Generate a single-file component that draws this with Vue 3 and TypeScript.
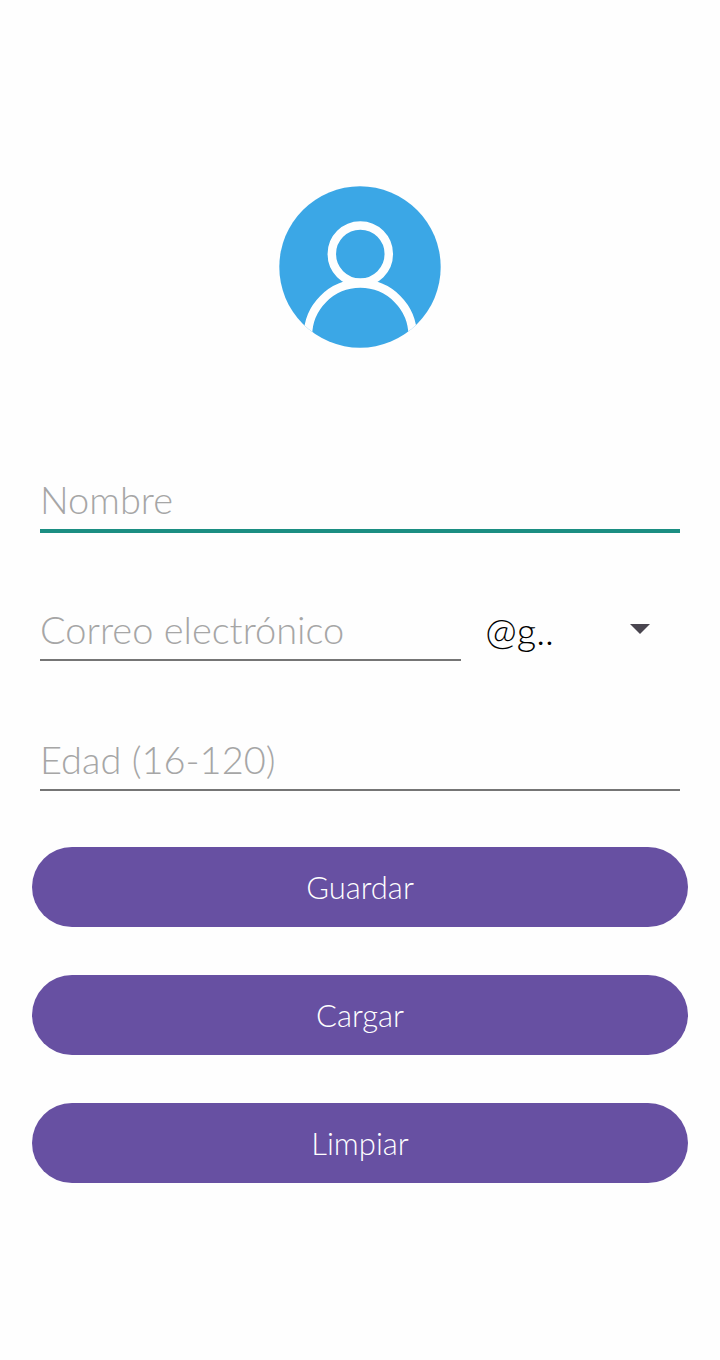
<script setup lang="ts">
import { ref } from 'vue'

const name = ref('')
const email = ref('')
const domain = ref('@g..')
const age = ref('')

function save(): void {
  localStorage.setItem(
    'profile',
    JSON.stringify({ name: name.value, email: email.value, domain: domain.value, age: age.value }),
  )
}

function load(): void {
  const stored = localStorage.getItem('profile')
  if (!stored) return
  const profile = JSON.parse(stored)
  name.value = profile.name
  email.value = profile.email
  domain.value = profile.domain
  age.value = profile.age
}

function clear(): void {
  name.value = ''
  email.value = ''
  age.value = ''
}
</script>

<template>
  <main class="page">
    <svg class="avatar" viewBox="0 0 162 162" aria-hidden="true">
      <defs>
        <clipPath id="disc"><circle cx="81" cy="81" r="80.7" /></clipPath>
      </defs>
      <g clip-path="url(#disc)">
        <rect width="162" height="162" fill="#3ba7e6" />
        <g fill="none" stroke="#fefefe" stroke-width="8.5">
          <circle cx="81.3" cy="68" r="28.5" />
          <circle cx="81.3" cy="150" r="52.4" />
        </g>
      </g>
    </svg>

    <form class="form" @submit.prevent="save">
      <div class="fields">
        <div class="field">
          <input v-model="name" class="input active" type="text" placeholder="Nombre" aria-label="Nombre" />
        </div>
        <div class="row">
          <div class="field email">
            <input v-model="email" class="input" type="text" placeholder="Correo electrónico" aria-label="Correo electrónico" />
          </div>
          <div class="picker">
            <select v-model="domain" class="select" aria-label="Dominio">
              <option value="@g..">@g..</option>
            </select>
            <svg class="arrow" viewBox="0 0 20 10" aria-hidden="true">
              <path d="M0 0H20L10 10Z" fill="#49454f" />
            </svg>
          </div>
        </div>
        <div class="field">
          <input v-model="age" class="input" type="text" inputmode="numeric" placeholder="Edad (16-120)" aria-label="Edad (16-120)" />
        </div>
      </div>
      <div class="actions">
        <button class="button" type="submit">Guardar</button>
        <button class="button" type="button" @click="load">Cargar</button>
        <button class="button" type="button" @click="clear">Limpiar</button>
      </div>
    </form>
  </main>
</template>

<style>
body {
  margin: 0;
  background: #fefefe;
}
</style>

<style scoped>
.page {
  display: flex;
  flex-direction: column;
  align-items: center;
  gap: 125px;
  padding: 186px 32px 32px;
  font-family: Lato, "Open Sans", sans-serif;
  font-weight: 300;
}
.avatar {
  display: block;
  width: 162px;
  height: 162px;
}
.form {
  width: 100%;
  display: flex;
  flex-direction: column;
  gap: 56px;
}
.fields {
  display: flex;
  flex-direction: column;
  gap: 72px;
}
.field {
  padding: 0 8px;
}
.row {
  display: grid;
  grid-template-columns: 2fr 1fr;
}
.input {
  display: block;
  box-sizing: border-box;
  width: 100%;
  height: 58px;
  padding: 0 0 4px;
  border: 0;
  border-bottom: 2px solid #757575;
  border-radius: 0;
  outline: 0;
  background: transparent;
  color: #000;
  font: inherit;
  font-size: 38px;
}
.input::placeholder {
  color: #a6a6a6;
  opacity: 1;
}
.input.active {
  border-bottom-color: #1b8e82;
  box-shadow: 0 2px #1b8e82;
}
.picker {
  position: relative;
}
.select {
  appearance: none;
  display: block;
  box-sizing: border-box;
  width: 100%;
  height: 58px;
  padding: 0 64px 4px 16px;
  border: 0;
  outline: 0;
  background: transparent;
  color: #000;
  font: inherit;
  font-size: 38px;
}
.arrow {
  position: absolute;
  top: 21px;
  right: 38px;
  width: 20px;
  height: 10px;
  pointer-events: none;
}
.actions {
  display: flex;
  flex-direction: column;
  gap: 48px;
}
.button {
  height: 80px;
  border: 0;
  border-radius: 40px;
  background: #6750a2;
  color: #fff;
  font: inherit;
  font-size: 31px;
  cursor: pointer;
}
</style>
